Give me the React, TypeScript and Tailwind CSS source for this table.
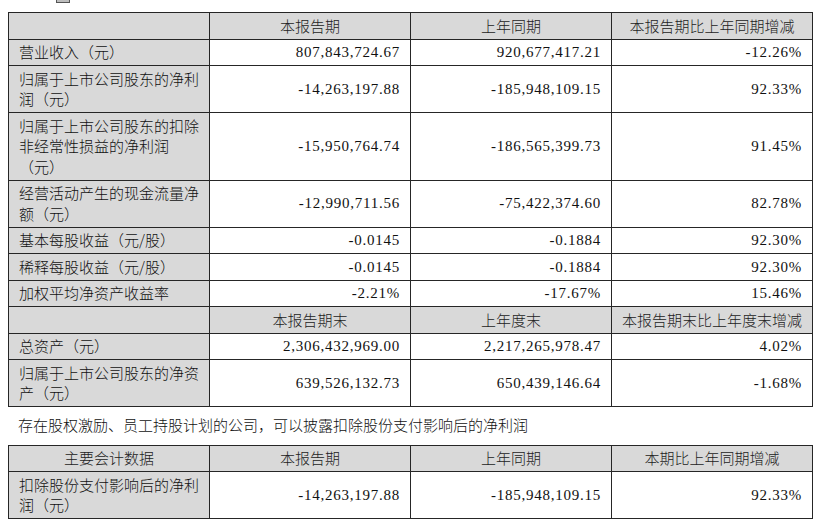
const cjk = "font-['Noto_Sans_CJK_SC',sans-serif]";
const num = "font-['Liberation_Serif','Noto_Sans_CJK_SC',serif] tracking-[0.75px]";

type Row = { label: string[]; a: string; b: string; c: string };

const part1: Row[] = [
  { label: ["营业收入（元）"], a: "807,843,724.67", b: "920,677,417.21", c: "-12.26%" },
  { label: ["归属于上市公司股东的净利", "润（元）"], a: "-14,263,197.88", b: "-185,948,109.15", c: "92.33%" },
  {
    label: ["归属于上市公司股东的扣除", "非经常性损益的净利润", "（元）"],
    a: "-15,950,764.74",
    b: "-186,565,399.73",
    c: "91.45%",
  },
  { label: ["经营活动产生的现金流量净", "额（元）"], a: "-12,990,711.56", b: "-75,422,374.60", c: "82.78%" },
  { label: ["基本每股收益（元/股）"], a: "-0.0145", b: "-0.1884", c: "92.30%" },
  { label: ["稀释每股收益（元/股）"], a: "-0.0145", b: "-0.1884", c: "92.30%" },
  { label: ["加权平均净资产收益率"], a: "-2.21%", b: "-17.67%", c: "15.46%" },
];

const part2: Row[] = [
  { label: ["总资产（元）"], a: "2,306,432,969.00", b: "2,217,265,978.47", c: "4.02%" },
  { label: ["归属于上市公司股东的净资", "产（元）"], a: "639,526,132.73", b: "650,439,146.64", c: "-1.68%" },
];

const part3: Row[] = [
  { label: ["扣除股份支付影响后的净利", "润（元）"], a: "-14,263,197.88", b: "-185,948,109.15", c: "92.33%" },
];

const cell = "border border-[#262626] px-[10px] py-[2.5px] leading-[20.5px] text-[15px]";

function HeadRow({ cols }: { cols: string[] }) {
  return (
    <tr className="bg-[#d9d9d9]">
      {cols.map((c, i) => (
        <th key={i} className={`${cell} ${cjk} font-light text-center text-[#222]`}>
          {c}
        </th>
      ))}
    </tr>
  );
}

function DataRow({ row }: { row: Row }) {
  return (
    <tr>
      <td className={`${cell} ${cjk} font-light bg-[#d9d9d9] text-left text-[#111]`}>
        {row.label.map((l, i) => (
          <div key={i}>{l}</div>
        ))}
      </td>
      {[row.a, row.b, row.c].map((v, i) => (
        <td key={i} className={`${cell} ${num} bg-white text-right text-[#111]`}>
          {v}
        </td>
      ))}
    </tr>
  );
}

function Cols() {
  return (
    <colgroup>
      <col className="w-[201px]" />
      <col className="w-[201px]" />
      <col className="w-[201px]" />
      <col className="w-[201px]" />
    </colgroup>
  );
}

export default function App() {
  return (
    <div className="w-[817px] h-[527px] bg-white overflow-hidden px-[8px]">
      <div className="h-[12px]">
        <div className="ml-[48px] w-[14px] h-[3px] border border-t-0 border-[#555] bg-[#bdbdbd]" />
      </div>

      <table className="table-fixed border-collapse w-[805px]">
        <Cols />
        <tbody>
          <HeadRow cols={["", "本报告期", "上年同期", "本报告期比上年同期增减"]} />
          {part1.map((r, i) => (
            <DataRow key={i} row={r} />
          ))}
          <HeadRow cols={["", "本报告期末", "上年度末", "本报告期末比上年度末增减"]} />
          {part2.map((r, i) => (
            <DataRow key={i} row={r} />
          ))}
        </tbody>
      </table>

      <p className={`${cjk} font-light text-[15px] leading-[20.5px] text-[#111] pl-[10px] mt-[8px] mb-[9px]`}>
        存在股权激励、员工持股计划的公司，可以披露扣除股份支付影响后的净利润
      </p>

      <table className="table-fixed border-collapse w-[805px]">
        <Cols />
        <tbody>
          <HeadRow cols={["主要会计数据", "本报告期", "上年同期", "本期比上年同期增减"]} />
          {part3.map((r, i) => (
            <DataRow key={i} row={r} />
          ))}
        </tbody>
      </table>
    </div>
  );
}
